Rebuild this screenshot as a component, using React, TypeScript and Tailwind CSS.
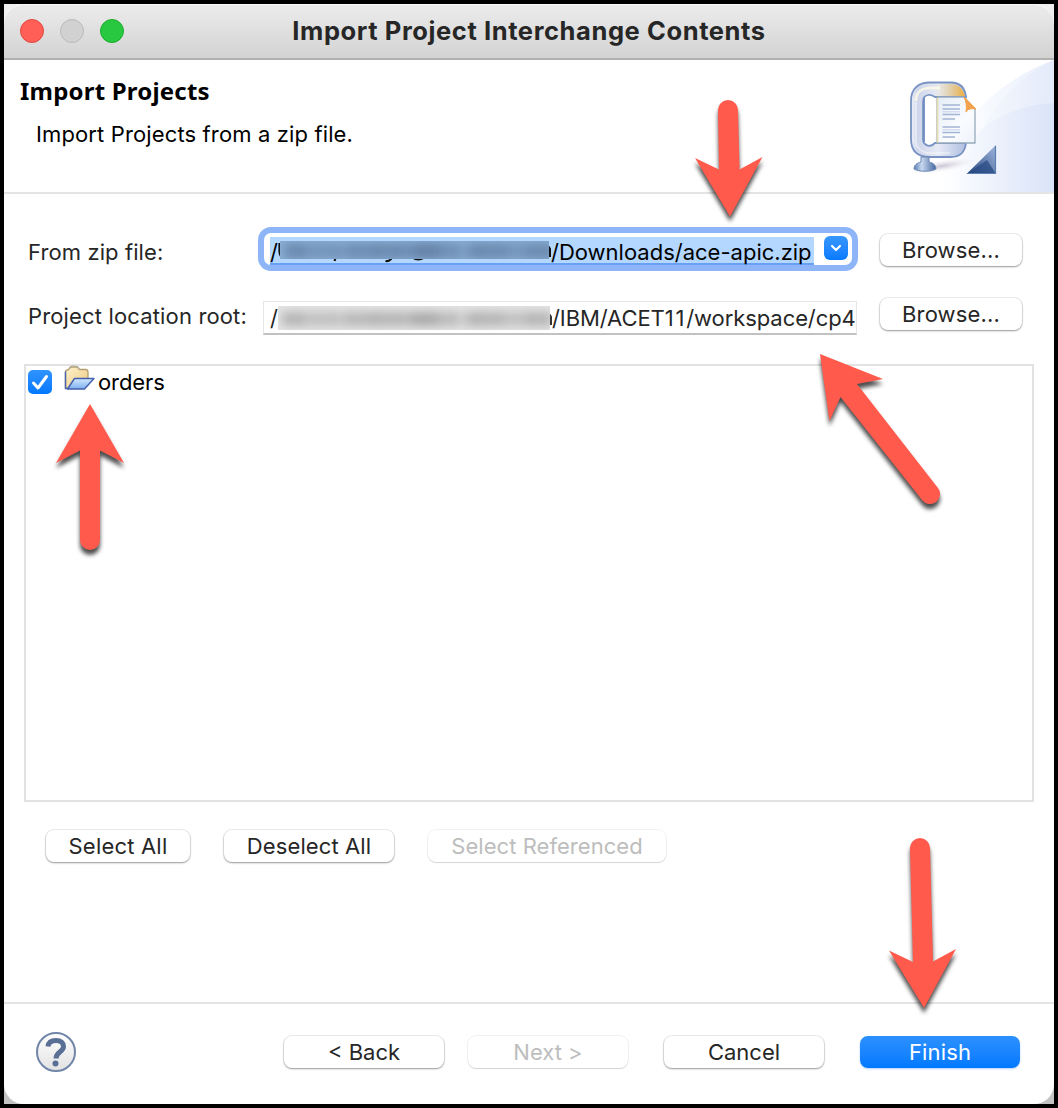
import type { ReactNode } from 'react';

function PushButton({ children, className = '' }: { children: ReactNode; className?: string }) {
  return (
    <button
      type="button"
      className={`flex h-8 shrink-0 items-center justify-center rounded-[8px] bg-white pb-px text-[#262626] shadow-[0_0_0_1px_rgba(0,0,0,0.07),0_1px_2px_rgba(0,0,0,0.36)] ${className}`}
    >
      {children}
    </button>
  );
}

function Banner() {
  return (
    <svg className="h-[132px] w-[150px] shrink-0" viewBox="904 60 150 132" aria-hidden="true">
      <defs>
        <linearGradient id="swoosh" gradientUnits="userSpaceOnUse" x1="935" x2="1054" y1="120" y2="120">
          <stop offset="0" stopColor="#fff" />
          <stop offset="0.4" stopColor="#f8fafe" />
          <stop offset="1" stopColor="#e9effb" />
        </linearGradient>
        <linearGradient id="swooshInner" gradientUnits="userSpaceOnUse" x1="950" x2="1054" y1="120" y2="120">
          <stop offset="0" stopColor="#dce5f8" stopOpacity="0" />
          <stop offset="0.3" stopColor="#dce5f8" stopOpacity="0.35" />
          <stop offset="1" stopColor="#d2def6" />
        </linearGradient>
        <linearGradient id="clampFill" x1="0" x2="1">
          <stop offset="0" stopColor="#eef1fa" />
          <stop offset="0.12" stopColor="#cfd6ea" />
          <stop offset="0.5" stopColor="#e6eaf6" />
          <stop offset="1" stopColor="#aebfe0" />
        </linearGradient>
        <linearGradient id="clampGlow" x1="0" x2="1">
          <stop offset="0" stopColor="#fbe3a0" stopOpacity="0" />
          <stop offset="1" stopColor="#efae3d" />
        </linearGradient>
        <linearGradient id="foot" x1="0" x2="1">
          <stop offset="0" stopColor="#5a7cb0" />
          <stop offset="0.35" stopColor="#c9d9f0" />
          <stop offset="1" stopColor="#44679f" />
        </linearGradient>
        <linearGradient id="page" x1="0" x2="1" y1="0" y2="1">
          <stop offset="0" stopColor="#e4ecf7" />
          <stop offset="0.6" stopColor="#fafcff" />
          <stop offset="1" stopColor="#eef3fb" />
        </linearGradient>
        <linearGradient id="wedge" x1="0" x2="1" y1="1" y2="0.3">
          <stop offset="0" stopColor="#24427c" />
          <stop offset="1" stopColor="#8fa9d1" />
        </linearGradient>
        <radialGradient id="floor">
          <stop offset="0" stopColor="#cbc5d4" />
          <stop offset="1" stopColor="#eeeaf2" stopOpacity="0" />
        </radialGradient>
      </defs>
      <path d="M910 192C940 170 965 92 1054 60V192Z" fill="url(#swoosh)" />
      <path d="M960 192C966 145 1000 84 1054 60V192Z" fill="url(#swooshInner)" opacity="0.25" />
      <path d="M935 192C960 140 996 106 1054 103V192Z" fill="url(#swooshInner)" opacity="0.5" />
      <ellipse cx="942" cy="166" rx="34" ry="6" fill="url(#floor)" transform="rotate(-9 942 166)" />
      <path
        d="M966 97C965 88 960 82.500 951 82.500H930C918 82.500 911 89 911 101V139C911 151 918 157 930 157H951C960 157 965 152 966 143H935C932 146 928 147 925 144C923 143 923 141 923 138V103C923 98 924 96 928 95C931 94 933 96 935 97Z"
        fill="url(#clampFill)"
        stroke="#7893c3"
        strokeWidth="1.8"
      />
      <path d="M934 84H951C959 84 963 89 965 96H934Z" fill="url(#clampGlow)" />
      <path d="M916 101C916 93 921 88 930 88H940" fill="none" stroke="#fffbe6" strokeWidth="2.500" opacity="0.8" />
      <path d="M916 102V140C916 148 922 153 930 153H950" fill="none" stroke="#fff" strokeWidth="1.500" opacity="0.5" />
      <path d="M924 98V142" stroke="#6f8dc2" strokeWidth="1.800" />
      <path d="M921 157H929V162C934 163 936 166 936 169C931 172 919 172 914 169C914 165 917 163 921 162Z" fill="url(#foot)" stroke="#6e89b7" />
      <path d="M937 97H964L975 109V143H937Z" fill="url(#page)" stroke="#97aaba" strokeWidth="1.300" />
      <path d="M937.500 98V142.500" stroke="#e6ddb4" strokeWidth="1.800" />
      <path d="M964 97L976 109C971 108 968 109 966 112C967 106 966 101 964 97Z" fill="#f4a24c" stroke="#f4a24c" />
      <path d="M942.500 105H960M942.500 109H960M942.500 114.500H960M942.500 119H955M942.500 127H960M942.500 132.500H960M942.500 137H955" stroke="#a2b4d3" strokeWidth="1.500" />
      <path d="M942.500 111.800H960M942.500 129.800H960" stroke="#d3dded" strokeWidth="1.500" />
      <path d="M966.500 174L996 145V174Z" fill="url(#wedge)" />
      <path d="M966.500 174L987 160L996 174Z" fill="#284a84" opacity="0.75" />
      <path d="M967 173.500H995.500V146" fill="none" stroke="#5b7eb5" strokeWidth="1.200" />
    </svg>
  );
}

function FolderIcon() {
  return (
    <svg className="-mt-2 ml-[12px] h-[26px] w-[31px]" viewBox="63.500 365.500 31 26" aria-hidden="true">
      <defs>
        <linearGradient id="folderBack" x1="0" x2="1" y1="0" y2="1">
          <stop offset="0" stopColor="#fff3cb" />
          <stop offset="1" stopColor="#edc882" />
        </linearGradient>
        <linearGradient id="folderFront" x1="0" x2="0" y1="0" y2="1">
          <stop offset="0" stopColor="#d2e8ff" />
          <stop offset="1" stopColor="#7db0ee" />
        </linearGradient>
      </defs>
      <path d="M65 388V372.500C65 371 66 370.500 68 370L70 367.500H77L79 370H85C87 370 87.500 371 87.500 373V379L67 389Z" fill="url(#folderBack)" stroke="#b6a06d" strokeWidth="1.300" />
      <path d="M69 370C69 367 71 366.700 73 366.700C76 366.700 78 367 78.500 370" fill="none" stroke="#b3ad9e" strokeWidth="1.300" />
      <path d="M65 372V389H68" fill="none" stroke="#4c66ad" strokeWidth="1.500" />
      <path d="M67 389.500L74 379H93.500L84 389.500Z" fill="url(#folderFront)" stroke="#445fae" strokeWidth="1.400" strokeLinejoin="round" />
    </svg>
  );
}

const arrows = [
  'M718 110A10 10 0 0 1 738 110L739.500 169.500L762.500 157L730 216.500L695 158L719 169.500Z',
  'M90 404L124 463L100 450.500V540A10 10 0 0 1 80 540V450.500L56 463Z',
  'M820 354L883 379L857 384L938 488A10 10 0 0 1 922 500L840.500 397L829.500 421Z',
  'M910 848A10 10 0 0 1 930 848L933 961.500L956 949L924 1008L889 950.500L913 962Z',
];

function Arrows() {
  return (
    <svg className="pointer-events-none absolute inset-0 h-full w-full" viewBox="0 0 1058 1108" aria-hidden="true">
      {arrows.map((d) => (
        <path key={d} d={d} fill="#ff5a4c" className="drop-shadow-[0_5px_2px_rgba(0,0,0,0.7)]" />
      ))}
    </svg>
  );
}

/* Smudged stretch that hides the private part of a path. */
function Redaction({ tone }: { tone: 'blue' | 'gray' }) {
  const blue = tone === 'blue';
  const blobs = [
    [4, 20, 0.8], [20, 38, 0.6], [56, 14, 0.5], [68, 30, 0.75], [94, 26, 0.8], [118, 18, 0.75],
    [134, 26, 1], [158, 24, 0.7], [186, 16, 0.75], [198, 28, 0.8], [226, 24, 0.6], [248, 26, 0.8],
  ];
  return (
    <svg className="block h-[27px] w-[274px] shrink-0" viewBox="0 0 274 27" aria-hidden="true">
      {blue && (
        <path
          d="M2.500 6V15Q3 20.500 8 21M60 17L57.500 24M116 18Q114 25 108.500 24M135 20Q141 24.500 147 20.500"
          fill="none"
          stroke="#111"
          strokeWidth="2.200"
        />
      )}
      <path d="M273 20V13Q273 10 270 9" fill="none" stroke={blue ? '#111' : '#333'} strokeWidth="2.200" />
      <svg x={blue ? 3 : 0} y={blue ? 4 : 1} width={blue ? 269 : 272} height={blue ? 18 : 24}>
        <rect width="272" height="24" fill={blue ? '#8cb0d8' : '#e4e4e4'} />
        <g className="blur-[5px]">
          {blobs.map(([x, w, o]) => (
            <rect key={x} x={x} y={blue ? 2 : 6} width={w} height={blue ? 16 : 14} fill={blue ? '#6583a8' : '#aaaaaa'} opacity={o} />
          ))}
        </g>
      </svg>
    </svg>
  );
}

export default function App() {
  return (
    <div className="relative h-[1108px] w-[1058px] overflow-hidden bg-black p-1 font-['Inter',sans-serif] text-[22px] leading-[28px] tracking-[0.15px] text-black">
      <div className="h-full bg-gradient-to-b from-[#f0f0f0] to-[#c4c4c4]">
        <div className="flex h-full flex-col overflow-hidden rounded-[20px] bg-white">
          <header className="relative flex h-14 shrink-0 items-center gap-4 rounded-t-[20px] border-b-2 border-[#b0b0b0] bg-gradient-to-b from-[#ececec] to-[#d3d3d3] px-4 shadow-[inset_0_1px_0_#f8f8f8]">
            <span className="size-6 rounded-full border border-[#e2483f] bg-[#ff5f57]" />
            <span className="size-6 rounded-full border border-[#b9b9b9] bg-[#d1d1d1]" />
            <span className="size-6 rounded-full border border-[#1dad2b] bg-[#28c840]" />
            <h1 className="absolute inset-x-0 top-[13px] text-center text-[25.500px] font-bold tracking-[0.590px] text-[#262626]">
              Import Project Interchange Contents
            </h1>
          </header>

          <section className="flex h-[134px] shrink-0 justify-between border-b-2 border-[#e4e4e4]">
            <div className="pt-[17px] pl-4">
              <h2 className="font-['Noto_Sans',sans-serif] text-[24px] font-bold tracking-[0.200px]">Import Projects</h2>
              <p className="mt-[15px] ml-4 tracking-[0.130px]">Import Projects from a zip file.</p>
            </div>
            <Banner />
          </section>

          <main className="h-[810px] shrink-0 border-b-2 border-[#e4e4e4] px-5">
            <div className="flex h-[141px] pt-[33px]">
              <div className="w-[239px] pl-1 text-[#262626]">
                <div className="mt-[11px] h-7 tracking-[0.100px]">From zip file:</div>
                <div className="mt-9 h-7">Project location root:</div>
              </div>
              <div className="w-[594px]">
                <div className="mt-[6px] ml-px flex h-8 w-[588px] items-stretch rounded-[7px] bg-white shadow-[0_0_0_6px_#8fb5f9]">
                  <div className="mt-1 ml-[6px] flex h-[28px] w-[544px] items-start border-b-2 border-[#69a0f5] bg-[#b3d7ff] leading-[31px]">
                    <span className="h-[26px] w-[7px] shrink-0">/</span>
                    <Redaction tone="blue" />
                    <span className="h-[26px] tracking-[0px] whitespace-nowrap">/Downloads/ace-apic.zip</span>
                  </div>
                  <span className="mt-[3px] ml-[10px] flex h-6 w-6 items-center justify-center rounded-[6px] bg-gradient-to-b from-[#3797ff] to-[#067aff]">
                    <svg className="size-3" viewBox="0 0 12 12" aria-hidden="true">
                      <path d="M2 4L6 8L10 4" fill="none" stroke="#fff" strokeWidth="2.200" strokeLinecap="round" strokeLinejoin="round" />
                    </svg>
                  </span>
                </div>
                <div className="mt-9 flex h-[34px] items-start border border-b-2 border-[#e6e6e6] border-b-[#c2c2c2] pl-[6px] text-[#262626]">
                  <span className="w-2 shrink-0 pt-[2px]">/</span>
                  <span className="pt-[3px]"><Redaction tone="gray" /></span>
                  <span className="shrink-0 pt-[2px] whitespace-nowrap tracking-[-0.080px]">
                    /IBM/ACET<span className="tracking-[1.800px] [font-kerning:none]">11</span>/workspace/cp4
                  </span>
                </div>
              </div>
              <div className="flex flex-col gap-8 pt-[7px] pl-[23px]">
                <PushButton className="w-[142px]">Browse...</PushButton>
                <PushButton className="w-[142px]">Browse...</PushButton>
              </div>
            </div>

            <div className="mt-[29px] h-[438px] border-2 border-[#e2e2e2] pt-[2px] pl-[2px]">
              <label className="flex items-center">
                <span className="flex size-6 items-center justify-center rounded-[5px] bg-gradient-to-b from-[#2f94ff] to-[#0078ff]">
                  <svg className="size-6" viewBox="0 0 24 24" aria-hidden="true">
                    <path d="M5.500 13L10 18L18.500 6.500" fill="none" stroke="#fff" strokeWidth="3" strokeLinecap="round" strokeLinejoin="round" />
                  </svg>
                </span>
                <FolderIcon />
                <span className="ml-[3px] tracking-[-0.100px]">orders</span>
              </label>
            </div>

            <div className="mt-7 flex gap-[34px] pl-[22px]">
              <PushButton className="w-[144px] tracking-[0.200px]">Select All</PushButton>
              <PushButton className="w-[170px] tracking-[0.100px]">Deselect All</PushButton>
              <button type="button" disabled className="h-8 w-[238px] rounded-[8px] bg-white pb-px tracking-[0.050px] text-[#bdbdbd] shadow-[0_0_0_1px_rgba(0,0,0,0.05),0_1px_1px_rgba(0,0,0,0.12)]">
                Select Referenced
              </button>
            </div>
          </main>

          <footer className="flex flex-1 items-start pt-8 pl-8">
            <svg className="-mt-[4px] size-10 shrink-0" viewBox="0 0 40 40" aria-hidden="true">
              <defs>
                <linearGradient id="help" x1="0" x2="0" y1="0" y2="1">
                  <stop offset="0" stopColor="#fff" />
                  <stop offset="1" stopColor="#e2e2e2" />
                </linearGradient>
              </defs>
              <circle cx="20" cy="20" r="19" fill="url(#help)" stroke="#7186a8" strokeWidth="2" />
              <path d="M12 14.500C12.500 10 15.500 8.500 20 8.500C25 8.500 27.500 11 27.500 14.500C27.500 20 20 19.500 20 26.500" fill="none" stroke="#596f95" strokeWidth="5" />
              <circle cx="19.500" cy="31.500" r="3" fill="#596f95" />
            </svg>
            <PushButton className="ml-[208px] w-[160px] tracking-[0px]">&lt; Back</PushButton>
            <button type="button" disabled className="ml-6 h-8 w-[160px] rounded-[8px] bg-white pb-px tracking-[0px] text-[#bdbdbd] shadow-[0_0_0_1px_rgba(0,0,0,0.05),0_1px_1px_rgba(0,0,0,0.12)]">
              Next &gt;
            </button>
            <PushButton className="ml-9 w-[160px] tracking-[0px]">Cancel</PushButton>
            <button type="button" className="ml-9 h-8 w-[160px] rounded-[8px] bg-gradient-to-b from-[#2c91ff] to-[#0079ff] text-white shadow-[0_1px_2px_rgba(0,100,255,0.3)]">
              Finish
            </button>
          </footer>
        </div>
      </div>
      <Arrows />
    </div>
  );
}
